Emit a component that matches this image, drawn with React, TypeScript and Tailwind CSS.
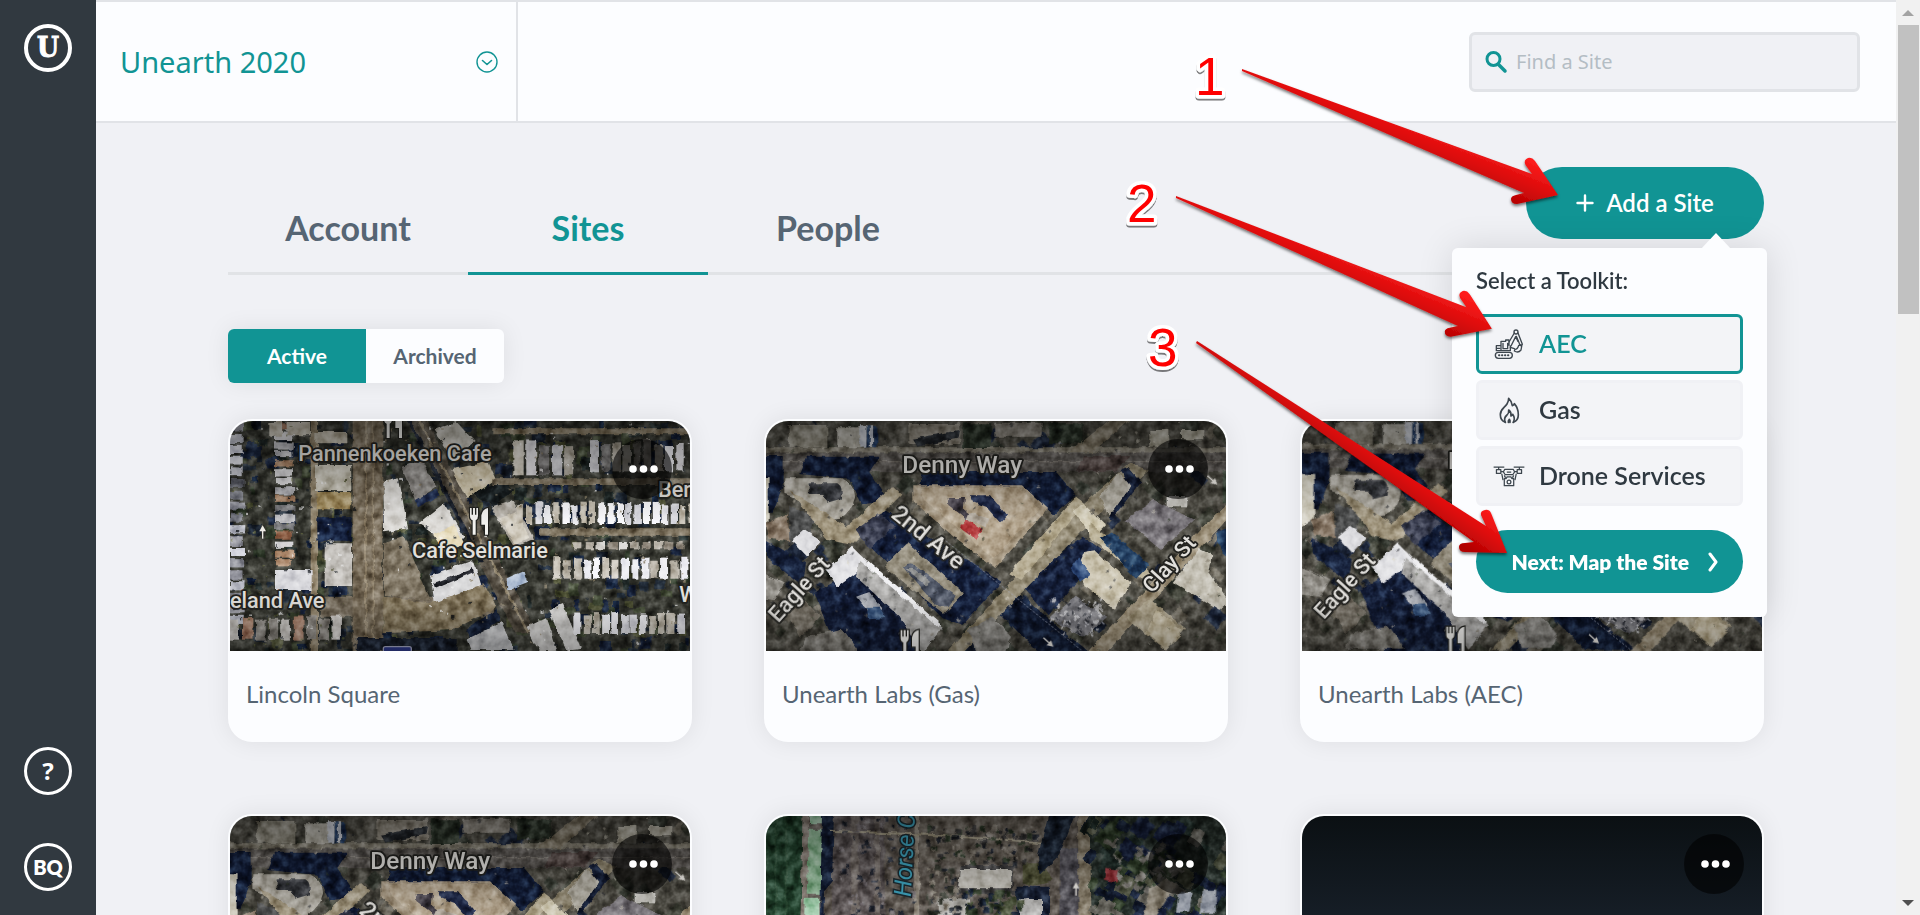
import React, { useState } from 'react';

type MapKind = 'lincoln' | 'denny' | 'horse' | 'night';

interface Site {
  id: string;
  name: string;
  map: MapKind;
  shiftX?: number;
  shiftY?: number;
}

interface Toolkit {
  key: string;
  label: string;
  icon: React.ReactNode;
}

const SITES: Site[] = [
  { id: 'lincoln', name: 'Lincoln Square', map: 'lincoln' },
  { id: 'gas', name: 'Unearth Labs (Gas)', map: 'denny' },
  { id: 'aec', name: 'Unearth Labs (AEC)', map: 'denny', shiftX: 29, shiftY: -10 },
  { id: 'labs', name: 'Unearth Labs', map: 'denny', shiftX: 12, shiftY: 3 },
  { id: 'campus', name: 'Campus', map: 'horse' },
  { id: 'night', name: 'Demo Site', map: 'night' },
];

// Small seeded generator so the map details are the same on every render
const seeded = (seed: number) => {
  let s = seed;
  return () => {
    s = (s * 16807) % 2147483647;
    return s / 2147483647;
  };
};

interface ScatterProps {
  seed: number;
  count: number;
  box: [number, number, number, number];
  size: [number, number];
  colors: string[];
  rotate?: number;
  opacity?: number;
}

const Scatter: React.FC<ScatterProps> = ({ seed, count, box, size, colors, rotate = 0, opacity = 1 }) => {
  const rand = seeded(seed);
  const [x, y, w, h] = box;
  return (
    <g opacity={opacity}>
      {Array.from({ length: count }, (_, i) => {
        const cx = x + rand() * w;
        const cy = y + rand() * h;
        const rw = size[0] + rand() * (size[1] - size[0]);
        const rh = size[0] + rand() * (size[1] - size[0]);
        const fill = colors[Math.floor(rand() * colors.length)];
        return <rect key={i} x={cx} y={cy} width={rw} height={rh} fill={fill} transform={`rotate(${rotate} ${cx} ${cy})`} />;
      })}
    </g>
  );
};

// A street of narrow houses, laid out left to right or top to bottom
const HouseRow: React.FC<{
  seed: number;
  x: number;
  y: number;
  length: number;
  depth: number;
  step: number;
  vertical?: boolean;
  colors: string[];
}> = ({ seed, x, y, length, depth, step, vertical = false, colors }) => {
  const rand = seeded(seed);
  return (
    <g>
      {Array.from({ length: Math.floor(length / step) }, (_, i) => {
        const at = i * step + rand() * 4;
        const thick = step * (0.68 + rand() * 0.18);
        const deep = depth * (0.8 + rand() * 0.2);
        const fill = colors[Math.floor(rand() * colors.length)];
        return vertical ? (
          <rect key={i} x={x} y={y + at} width={deep} height={thick} fill={fill} />
        ) : (
          <rect key={i} x={x + at} y={y + depth - deep} width={thick} height={deep} fill={fill} />
        );
      })}
    </g>
  );
};

const ROOFS = ['#c9c9cd', '#e0dfe2', '#a9a397', '#8f8a82', '#d3cec2', '#f0f0f4', '#6e6c6b'];
const TREES = ['#2b3526', '#3c4430', '#4d5034', '#1d2524', '#222c38'];
const SHADOWS = ['#0f1a30', '#18233b', '#141b26'];

const MapLabel: React.FC<{ x: number; y: number; size: number; rotate?: number; children: React.ReactNode }> = ({
  x,
  y,
  size,
  rotate = 0,
  children,
}) => (
  <text
    transform={`translate(${x} ${y}) rotate(${rotate})`}
    fontFamily="Roboto, sans-serif"
    fontSize={size}
    fontWeight={500}
    fill="#e2e0dc"
    stroke="#22221f"
    strokeWidth={11}
    strokeLinejoin="round"
    paintOrder="stroke"
  >
    {children}
  </text>
);

const Cutlery: React.FC<{ x: number; y: number }> = ({ x, y }) => (
  <g transform={`translate(${x} ${y})`} stroke="#22221f" strokeWidth={7} paintOrder="stroke" fill="#f4f3f0">
    <path d="M0 0h5v20h4V0h6v20h4V0h5v24q0 10-7 13v43H8V37Q0 34 0 24z" />
    <path d="M54 0v80h-9V50H34V22Q38 2 54 0z" />
  </g>
);

const MapArrow: React.FC<{ x: number; y: number; rotate: number }> = ({ x, y, rotate }) => (
  <g transform={`translate(${x} ${y}) rotate(${rotate})`} fill="#efece6">
    <rect x={-40} y={-2} width={30} height={4} />
    <path d="M0 0l-18-10v20z" />
  </g>
);

const LincolnMap: React.FC = () => (
  <g>
    <g filter="url(#rough)">
      <rect x="0" y="0" width="1440" height="760" fill="#35362f" />
      <Scatter seed={11} count={420} box={[20, 20, 1400, 710]} size={[10, 42]} colors={[...TREES, ...SHADOWS]} />
      <path d="M272 30h22v700h-22zM820 55h600v18H820z" fill="#8d8068" />
      <path d="M300 560h520v60H300z" fill="#6d6353" />
      {/* Main street and the diagonal avenue */}
      <path d="M398 30h92v700h-92z" fill="#746855" />
      <path d="M436 30h4v700h-4zM458 30h3v700h-3z" fill="#9b8d74" />
      <path d="M560 30h60l330 640h-64z" fill="#544d42" />
      <path d="M592 30h8l330 640h-8z" fill="#8c8069" />
      <path d="M560 30h12l220 430h-14z" fill="#171c26" />
      <path d="M490 560l140 20 160-60 40 70-130 70-210 10z" fill="#807359" />
      <path d="M492 400l60-20 80 190-140-12z" fill="#807664" />
      {/* West blocks */}
      <HouseRow seed={3} x={30} y={36} length={640} depth={46} step={34} vertical colors={['#b9bbc4', '#8e8f98', '#d7d8e0', '#6c6e77']} />
      <HouseRow seed={4} x={165} y={40} length={440} depth={62} step={27} vertical colors={['#b9b9bd', '#a58063', '#77777a', '#d3d2d4', '#8d5f46']} />
      <path d="M148 36h38v44h-38zM200 36h70v40h-70zM286 66h96v34h-96z" fill="#bfb9aa" />
      <path d="M165 480h110v60H165z" fill="#d9d9dd" />
      <path d="M288 165h106v78H288z" fill="#c3bfb2" />
      <path d="M290 246h104v52H290z" fill="#9f8a5c" />
      <path d="M292 322h102v70H292z" fill="#131e3a" />
      <path d="M314 400h82v128h-82z" fill="#c2bfba" />
      <HouseRow seed={8} x={30} y={615} length={360} depth={74} step={38} colors={['#8b8781', '#a37d68', '#c9c6c2', '#6d6a66']} />
      {/* Blocks between the two streets */}
      <path d="M490 215l46-10 28 150-72 12z" fill="#dad8d4" />
      <path d="M545 170l60-20 44 80-62 44z" fill="#8d8a86" />
      <path d="M584 270l66-34 8 20-64 36z" fill="#1d2a4c" />
      <path d="M640 60l70-24 54 60-66 44z" fill="#c2bfb6" />
      <path d="M694 178l110-22 24 54-88 54z" fill="#cdc3aa" />
      <path d="M760 250l90-40 30 30-60 50z" fill="#171d1f" />
      <path d="M596 340l76-60 58 100-30 30z" fill="#dcdad6" />
      <path d="M640 375l62-30 30 60-60 20z" fill="#e6dbbc" />
      <path d="M812 290l66-20 64 116-60 26z" fill="#b4afa6" />
      <path d="M838 325l50-18 40 76-44 22z" fill="#d0cabd" />
      <path d="M630 495l130-44 24 74-140 52z" fill="#d5d5d6" />
      <path d="M640 520l118-46 4 12-116 50z" fill="#23252b" />
      <path d="M735 660l94-62 12 34-88 54z" fill="#131c31" />
      <path d="M740 690l104-54 40 84H752z" fill="#bcbdbf" />
      <path d="M920 650l60-26 32 98-56 2z" fill="#c9c8c6" />
      <path d="M985 600l44-18 54 134-42 6z" fill="#d2d1cf" />
      <path d="M860 505l50-22 12 34-60 24z" fill="#aebdd2" />
      {/* East side streets */}
      <path d="M960 355h460v22H960zM820 205h600v20H820z" fill="#7f7460" />
      <HouseRow seed={21} x={880} y={88} length={190} depth={108} step={38} colors={ROOFS} />
      <HouseRow seed={22} x={1110} y={86} length={310} depth={98} step={32} colors={ROOFS} />
      <HouseRow seed={23} x={890} y={274} length={540} depth={68} step={27} colors={['#e9e9ee', '#fafafd', '#c3bcae', '#d8d8de']} />
      <HouseRow seed={24} x={1060} y={392} length={360} depth={26} step={34} colors={['#b3ada2', '#d8d6d2', '#8f877b']} />
      <HouseRow seed={25} x={1000} y={440} length={420} depth={66} step={29} colors={['#ececf1', '#cfcac0', '#f8f8fb', '#b5afa3']} />
      <HouseRow seed={26} x={1060} y={606} length={360} depth={66} step={28} colors={['#d6d6dc', '#bdb7ab', '#ececf0']} />
      <Scatter seed={31} count={220} box={[490, 40, 920, 680]} size={[3, 9]} colors={['#151a20', '#f4f4f4', '#8d8168']} opacity={0.7} />
      <Scatter seed={32} count={110} box={[30, 40, 370, 680]} size={[3, 10]} colors={['#151a20', '#e4e4e4', '#5b5f37']} opacity={0.7} />
      <path d="M410 684h300v40H410z" fill="#141a26" />
    </g>
    <rect x="490" y="710" width="84" height="40" rx="6" fill="#2e3a8c" stroke="#a5a8c4" strokeWidth="4" />
    <Cutlery x={492} y={4} />
    <Cutlery x={750} y={294} />
    <MapArrow x={128} y={346} rotate={-90} />
    <MapLabel x={235} y={153} size={65}>Pannenkoeken Cafe</MapLabel>
    <MapLabel x={576} y={445} size={65}>Cafe Selmarie</MapLabel>
    <MapLabel x={30} y={595} size={65}>eland Ave</MapLabel>
    <MapLabel x={1314} y={260} size={65}>Ber</MapLabel>
    <MapLabel x={1378} y={577} size={65}>W</MapLabel>
  </g>
);

const DennyMap: React.FC = () => (
  <g>
    <g filter="url(#rough)">
      <rect x="-60" y="-40" width="1560" height="820" fill="#4a4840" />
      <Scatter
        seed={5}
        count={260}
        box={[-50, -20, 1500, 780]}
        size={[16, 60]}
        colors={['#33372f', '#3b3d33', '#59564d', '#6b665a', '#4f4c44', '#1b2437']}
        rotate={42}
      />
      {/* North side of Denny Way */}
      <path d="M-60 112h1560v16H-60z" fill="#837e71" />
      <path d="M-60 128h1560v58H-60z" fill="#56524e" />
      <path d="M-60 154h1560v3H-60z" fill="#7b766e" />
      <path d="M985 138h140l-50 46H960z" fill="#4b3f3c" />
      <path d="M98 45h116v66H98z" fill="#8d897c" />
      <path d="M244 52h70v60h-70z" fill="#b3b0a6" />
      <path d="M310 46h22v64h-22zM340 46h12v64h-12z" fill="#c8ccd4" />
      <path d="M332 46h9v66h-9zM352 46h12v66h-12z" fill="#274066" />
      <path d="M460 42h150v60H460z" fill="#8b8579" />
      <path d="M470 86l140-26-6 26-120 24z" fill="#22262b" />
      <path d="M715 38h142v42H715z" fill="#8c877e" />
      <path d="M620 40h86v74h-86zM880 40h100v60H880z" fill="#272f25" />
      <path d="M1060 30h60l-110 96h-70z" fill="#7d7564" />
      <path d="M1180 60h60v50h-60zM1275 60h70v28h-70z" fill="#aaa698" />
      {/* Building shadows */}
      <path d="M-60 138H80v90l-30 80H-60zM150 140h220l-30 46 60 90-80 10-40-80-150-14z" fill="#111b35" />
      <path d="M500 186h400l60 70-66 60-96-88H490z" fill="#111b35" />
      <path d="M30 390l120 70-10 70-110-90z" fill="#141e37" />
      <path d="M370 290l370 225-120 130-60-20-190-190-70-70z" fill="#131d38" />
      <path d="M175 550l120-70 240 180-60 80H250z" fill="#121b34" />
      <path d="M790 520l190-140 60 40-160 200z" fill="#151f3a" />
      <path d="M720 600l70-50 210 180H850z" fill="#10192f" />
      {/* West block */}
      <path d="M85 205h170q40 14 42 58-10 40-46 64l-56 4-30-50-80-30z" fill="#a9a59b" />
      <path d="M158 220h86q20 12 10 46l-40 12-12-26h-44z" fill="#3a3c41" />
      <path d="M-30 205h68v130l-68 40z" fill="#d8d4c6" />
      <path d="M100 290l80 30-20 60-64 30z" fill="#4a4b4b" />
      <path d="M30 340l66-30 4 84-60-8z" fill="#7f6f5e" />
      <path d="M100 240l170 110 140-120 26 24-150 150-70-14z" fill="#9d927a" />
      <path d="M108 392l36-32 50 32-42 46z" fill="#dcdcdf" />
      <path d="M300 360l66-50 54 36-80 70z" fill="#363a4c" />
      <path d="M384 470l70-70 170 150-60 62z" fill="#918a79" />
      <path d="M440 470q20-20 44 0l116 88-22 30q-36 10-54-20z" fill="#4f5665" />
      <path d="M452 480q18-10 34 6l40 30-14 10z" fill="#8a8b8a" />
      {/* Eagle St roofs */}
      <path d="M208 480l80-70 50 50-92 70z" fill="#e1e1e4" />
      <path d="M310 450l250 200-60 80-70-110-130-120z" fill="#a9a8a6" />
      <path d="M336 452l220 190-10 10-216-186z" fill="#f0f0f2" />
      <path d="M-30 470l116 50-30 50-86-10z" fill="#8f8c85" />
      <path d="M86 600l60-30 46 50-60 64z" fill="#706a5f" />
      <path d="M300 560l40-14 40 50-30 24z" fill="#9fa3ab" />
      <path d="M330 590l40 0 20 34-50 4z" fill="#314d75" />
      <path d="M150 680l110-24 50 70H130z" fill="#7a7770" />
      {/* Triangular lot at 2nd Ave */}
      <path d="M472 226h326l78 70-158 178-110-80-136-120z" fill="#a3957f" />
      <path d="M490 234h300l60 62-136 150-210-176z" fill="#b1a28b" />
      <path d="M575 264h52l-4 34 30 22-16 14-60-46z" fill="#46414a" />
      <path d="M640 256h62l52 62-20 22-44-50-38-14z" fill="#1d2644" />
      <path d="M640 306l60 20-8 26-60-24z" fill="#b5ada1" />
      <path d="M632 328l48 30-20 30-48-36z" fill="#b23a3c" />
      {/* Avenue running north east */}
      <path d="M570 730l390-430 160-140 60 20-170 150-390 400z" fill="#8f8670" />
      <path d="M760 490l200-230 26 20-190 230z" fill="#b3a98f" />
      <path d="M950 300l30-20 70 66-40 40z" fill="#d3ccb6" />
      <path d="M1000 340l70 50 120 100-30 20-160-130z" fill="#b9b096" />
      <path d="M1034 386l36-20 110 100-40 40z" fill="#1f3a5c" />
      <path d="M1030 260l56-70 46 34-70 100z" fill="#b2aea3" />
      <path d="M1090 180l26-10 40 46-90 116-10-8 70-96z" fill="#121a30" />
      <path d="M1105 330l90-60 120 60-100 90z" fill="#79757a" />
      <path d="M1232 258h62v34h-62z" fill="#c4c2bc" />
      {/* Clay St */}
      <path d="M980 740l190-200 170-190 90-80v40l-200 220-190 210z" fill="#998d76" />
      <path d="M985 425l30-4 108 98-46 80-90-70-24-50z" fill="#c8c1ad" />
      <path d="M944 474l24-34 34 56-30 22z" fill="#2f4a78" />
      <path d="M882 626l74-66 98 60-70 66z" fill="#77777c" />
      <path d="M636 660l70-40 62 60-20 44H660z" fill="#85837e" />
      <path d="M1110 626l70-60 110 90-60 66z" fill="#a59b83" />
      <path d="M1200 600l80 60-50 60-60-50z" fill="#c2b89f" />
      <path d="M1250 516l80-100 40 20-10 50 60 90-30 26z" fill="#c0bcb0" />
      <path d="M1380 370l60-30v120l-46-40z" fill="#1c3456" />
      <path d="M1400 180h100v100h-100z" fill="#3c463a" />
      <Scatter seed={44} count={260} box={[-40, 0, 1500, 740]} size={[3, 10]} colors={['#14171d', '#d9d4c5', '#7c7463', '#2c3524']} rotate={42} opacity={0.5} />
      <Scatter seed={45} count={70} box={[890, 560, 150, 110]} size={[4, 12]} colors={['#dadadd', '#20242c']} rotate={42} opacity={0.7} />
    </g>
    <path d="M560 385L1000 740" stroke="#a9afc0" strokeWidth="2" strokeDasharray="7 5" />
    <MapArrow x={1384} y={224} rotate={42} />
    <MapArrow x={892} y={710} rotate={42} />
    <Cutlery x={434} y={660} />
    <MapLabel x={439} y={188} size={73}>Denny Way</MapLabel>
    <MapLabel x={402} y={318} size={72} rotate={39}>2nd Ave</MapLabel>
    <MapLabel x={66} y={640} size={65} rotate={-48}>Eagle St</MapLabel>
    <MapLabel x={1188} y={552} size={65} rotate={-48}>Clay St</MapLabel>
  </g>
);

const HorseMap: React.FC = () => (
  <g>
    <g filter="url(#rough)">
      <rect x="0" y="0" width="1440" height="760" fill="#5e5750" />
      <path d="M0 20h140l-14 720H0z" fill="#23432e" />
      <path d="M60 20v720M90 20v720M30 20v720" stroke="#3c5c44" strokeWidth="2" />
      <path d="M140 20h20l-10 720h-24z" fill="#8b8178" />
      <path d="M160 74h38v192h-46z" fill="#8fb996" />
      <path d="M162 20h36v38h-36zM146 278h44v300h-50z" fill="#a3cfae" />
      <path d="M198 20h36l-6 210-24 30-10 480h-8z" fill="#141e35" />
      <path d="M236 20h150v720H214z" fill="#5c5555" />
      <path d="M286 20h22v720h-22zM356 20h16v720h-16z" fill="#736b66" />
      <path d="M476 20h14v720h-18z" fill="#8f877a" />
      <path d="M490 20h390v150H490z" fill="#665f56" />
      <path d="M220 74l300 12 340 24v5l-340-22-300-13z" fill="#a39b85" />
      <path d="M614 180h170v10h-14v64h12v12H600z" fill="#20252e" opacity=".5" />
      <path d="M612 192h154v58H606z" fill="#c6c3bb" />
      <path d="M545 280h94v90h-94z" fill="#b5b3ae" />
      <path d="M782 245h100v90H782z" fill="#1a2338" />
      <path d="M790 282h68v60h-68z" fill="#b9b8b6" />
      <path d="M800 175h60l30 50-60 20-30-10z" fill="#4c4d33" />
      <path d="M880 20h80l-50 130-60 60-4-60z" fill="#182130" />
      <path d="M912 130h56v610h-62z" fill="#55535a" />
      <path d="M966 20h34l20 720h-50z" fill="#867c69" />
      <path d="M1000 20h430v720H1016z" fill="#27302b" />
      <Scatter seed={61} count={110} box={[1000, 20, 420, 330]} size={[14, 60]} colors={['#17203a', '#2f3d29', '#1c2824', '#4f5340', '#121a2c', '#66645c']} rotate={30} />
      <Scatter seed={62} count={50} box={[1080, 120, 200, 120]} size={[8, 26]} colors={['#8e8b84', '#6f6c66', '#2f3d29']} rotate={40} />
      <Scatter seed={66} count={60} box={[620, 250, 170, 130]} size={[8, 30]} colors={['#2a3524', '#434b33', '#172030']} />
      <path d="M1048 192l40 4-6 36-38-8z" fill="#9a3b41" />
      <path d="M1340 254h40v70h-46zM1270 260h40l-10 60h-40z" fill="#9aa0ab" />
      <path d="M1180 250l50-30 30 20-70 110h-30z" fill="#8c8475" />
      <Scatter seed={63} count={70} box={[250, 30, 220, 330]} size={[5, 18]} colors={['#1f232d', '#7d777a', '#2b303c']} />
      <Scatter seed={64} count={90} box={[510, 60, 320, 110]} size={[6, 20]} colors={['#1f232b', '#2c2b2b', '#8d867c', '#2f3a2a']} />
      <Scatter seed={65} count={60} box={[510, 180, 90, 160]} size={[6, 20]} colors={['#22262c', '#3a3d34', '#8b8478']} />
    </g>
    <MapArrow x={960} y={232} rotate={-90} />
    <text
      transform="translate(464 276) rotate(-87)"
      fontFamily="Roboto, sans-serif"
      fontSize="72"
      fontStyle="italic"
      fill="#3fa3bd"
      stroke="#1c2a30"
      strokeWidth="9"
      paintOrder="stroke"
    >
      Horse C
    </text>
  </g>
);

const MapDefs: React.FC = () => (
  <svg className="absolute h-0 w-0" aria-hidden="true">
    <defs>
      <filter id="rough" x="0" y="0" width="100%" height="100%" colorInterpolationFilters="sRGB">
        <feTurbulence type="fractalNoise" baseFrequency="0.04" numOctaves="2" seed="4" result="warp" />
        <feDisplacementMap in="SourceGraphic" in2="warp" scale="14" xChannelSelector="R" yChannelSelector="G" result="bent" />
        <feGaussianBlur in="bent" stdDeviation="1.8" result="soft" />
        <feTurbulence type="fractalNoise" baseFrequency="0.035" numOctaves="3" seed="9" result="noise" />
        <feColorMatrix in="noise" type="matrix" values="1.2 0 0 0 -0.07  1.2 0 0 0 -0.07  1.2 0 0 0 -0.07  0 0 0 0 1" result="gray" />
        <feBlend in="gray" in2="soft" mode="soft-light" />
      </filter>
      <linearGradient id="shade" x1="0" y1="0" x2="0" y2="1">
        <stop offset="0" stopColor="#000" stopOpacity=".4" />
        <stop offset=".45" stopColor="#000" stopOpacity="0" />
        <stop offset=".75" stopColor="#000" stopOpacity="0" />
        <stop offset="1" stopColor="#000" stopOpacity=".3" />
      </linearGradient>
      <linearGradient id="night" x1="0" y1="0" x2="0" y2="1">
        <stop offset="0" stopColor="#0b1013" />
        <stop offset=".45" stopColor="#161e27" />
        <stop offset="1" stopColor="#18222b" />
      </linearGradient>
    </defs>
  </svg>
);

const SiteMap: React.FC<{ site: Site }> = ({ site }) => {
  const { map, shiftX = 0, shiftY = 0 } = site;
  if (map === 'night') {
    return (
      <svg className="block h-full w-full" viewBox="0 0 1380 690" preserveAspectRatio="none">
        <rect width="1380" height="690" fill="url(#night)" />
      </svg>
    );
  }
  const left = 30 - shiftX;
  const top = 33 - shiftY;
  return (
    <svg className="block h-full w-full" viewBox={`${left} ${top} 1380 690`} preserveAspectRatio="xMidYMid slice">
      {map === 'lincoln' && <LincolnMap />}
      {map === 'denny' && <DennyMap />}
      {map === 'horse' && <HorseMap />}
      <rect x={left} y={top} width="1380" height="690" fill="url(#shade)" />
    </svg>
  );
};

const SiteCard: React.FC<{ site: Site }> = ({ site }) => (
  <article className="rounded-3xl border-2 border-[#fcfdff] bg-[#fcfdff] shadow-[0_0_24px_rgba(0,0,0,0.08)]">
    <div className="relative h-[230px] overflow-hidden rounded-t-[22px]">
      <SiteMap site={site} />
      <button
        type="button"
        aria-label={`Options for ${site.name}`}
        className="absolute right-[18px] top-[18px] flex h-[60px] w-[60px] items-center justify-center rounded-full bg-black/60"
      >
        <svg width="32" height="8" viewBox="0 0 32 8" fill="#fff">
          <circle cx="7" cy="4" r="3.8" />
          <circle cx="17.5" cy="4" r="3.8" />
          <circle cx="28" cy="4" r="3.8" />
        </svg>
      </button>
    </div>
    <h2 className="px-4 pb-8 pt-7 text-2xl leading-[29px] text-[#566573]">{site.name}</h2>
  </article>
);

const ExcavatorIcon = () => (
  <svg width="32" height="32" viewBox="280 292 96 96" fill="none" stroke="#3d464e" strokeWidth="4" strokeLinejoin="round" strokeLinecap="round">
    <rect x="287" y="365" width="51" height="18" rx="9" />
    <path d="M298 374h1M307 374h1M316 374h1M325 374h1" strokeWidth="6" />
    <path d="M290 360v-15h13M290 353h10M290 360h42v-14M304 360v-28h14v-4h10v16M310 338v16h14v-16M303 345h-8" />
    <path d="M328 334l16-27M334 346l14-28 7 14M332 350l12 4" />
    <circle cx="349" cy="304" r="6" />
    <path d="M355 307l13 34-6 4-12-28M367 342l-3 16q-8 10-20 3l2-5q8 0 11-12z" />
  </svg>
);

const FlameIcon = () => (
  <svg width="32" height="32" viewBox="278 492 96 96" fill="none" stroke="#3d464e" strokeWidth="5" strokeLinejoin="round" strokeLinecap="round">
    <path d="M315 577c-10-4-15-13-15-23 0-17 13-21 20-32 4-6 5-11 5-17 9 8 10 15 11 22 3-1 5-3 6-6 6 7 12 20 12 33 0 10-5 19-15 23" />
    <path d="M315 577c-5-10-1-17 5-22 4-4 6-9 5-15 7 5 8 10 7 18 3-1 4-3 5-5 5 7 7 15 2 24M324 577c-1-5 1-7 3-9 2 3 3 5 2 9" />
  </svg>
);

const DroneIcon = () => (
  <svg width="34" height="32" viewBox="276 692 102 96" fill="none" stroke="#3d464e" strokeWidth="4" strokeLinejoin="round">
    <path d="M278 712h34M342 712h34M294 712v8M360 712v8" />
    <rect x="287" y="720" width="14" height="12" />
    <rect x="353" y="720" width="14" height="12" />
    <path d="M301 726h10M343 726h10M313 719h28l4 8-6 9h-24l-6-9zM320 728h14" />
    <path d="M304 733l4 20M350 733l-4 20M312 738l4 8M342 738l-4 8" />
    <path d="M312 748h6l3-5h12l3 5h6v23h-30z" />
    <circle cx="327" cy="759" r="6" />
  </svg>
);

const TOOLKITS: Toolkit[] = [
  { key: 'aec', label: 'AEC', icon: <ExcavatorIcon /> },
  { key: 'gas', label: 'Gas', icon: <FlameIcon /> },
  { key: 'drone', label: 'Drone Services', icon: <DroneIcon /> },
];

const ToolkitMenu: React.FC = () => {
  const [selected, setSelected] = useState('aec');

  return (
    <div className="absolute -right-[3px] top-[81px] z-10 w-[315px] rounded-md bg-[#fcfdff] p-6 shadow-[0_0_36px_rgba(0,0,0,0.12)]">
      <svg className="absolute -top-[15px] right-9" width="30" height="16" viewBox="0 0 30 16" fill="#fcfdff">
        <path d="M0 16L15 0l15 16z" />
      </svg>
      <fieldset>
        <legend className="float-left mb-6 text-[22px] font-semibold leading-[18px] text-[#2f3941]">Select a Toolkit:</legend>
        <div className="clear-both flex flex-col gap-1.5">
          {TOOLKITS.map((kit) => (
            <label
              key={kit.key}
              className={`flex h-[60px] cursor-pointer items-center rounded-md bg-[#f3f4f7] pl-3.5 text-[25px] font-semibold ${
                selected === kit.key ? 'border-3 border-[#119494] text-[#119494]' : 'border-3 border-[#f0f1f5] text-[#2f3941]'
              }`}
            >
              <input
                type="radio"
                name="toolkit"
                value={kit.key}
                checked={selected === kit.key}
                onChange={() => setSelected(kit.key)}
                className="sr-only"
              />
              <span className="mr-3.5 flex w-8 shrink-0 justify-center">{kit.icon}</span>
              {kit.label}
            </label>
          ))}
        </div>
      </fieldset>
      <button
        type="button"
        className="mt-6 flex h-[63px] w-full items-center justify-end gap-[18px] rounded-full bg-[#119494] pr-6 text-[21px] font-extrabold text-white"
      >
        Next: Map the Site
        <svg width="12" height="20" viewBox="0 0 12 20" fill="none" stroke="currentColor" strokeWidth="3" strokeLinecap="round" strokeLinejoin="round">
          <path d="M3 2l6 8-6 8" />
        </svg>
      </button>
    </div>
  );
};

// Numbered walkthrough arrows that lie over the page
const Walkthrough: React.FC = () => (
  <svg className="pointer-events-none absolute right-0 top-0 z-20" width="800" height="620" viewBox="1120 0 800 620">
    <defs>
      <linearGradient id="arrowRed" gradientUnits="userSpaceOnUse" x1="1532" y1="160" x2="1514" y2="206">
        <stop offset="0" stopColor="#ff1c1c" />
        <stop offset=".5" stopColor="#dd0d0d" />
        <stop offset="1" stopColor="#b00000" />
      </linearGradient>
      <linearGradient id="arrowRedSteep" gradientUnits="userSpaceOnUse" x1="1499" y1="515" x2="1473" y2="553">
        <stop offset="0" stopColor="#ff1c1c" />
        <stop offset=".5" stopColor="#dd0d0d" />
        <stop offset="1" stopColor="#b00000" />
      </linearGradient>
      <filter id="arrowShadow" x="-10%" y="-10%" width="120%" height="120%">
        <feDropShadow dx="0" dy="2" stdDeviation="1.5" floodColor="#000" floodOpacity=".55" />
      </filter>
      <filter id="numberShadow" x="-20%" y="-20%" width="150%" height="150%">
        <feDropShadow dx="0" dy="2" stdDeviation=".5" floodColor="#000" floodOpacity=".5" />
      </filter>
    </defs>
    <g filter="url(#arrowShadow)">
      <path
        fill="url(#arrowRed)"
        d="M1242 69L1532 174L1525.500 165Q1523 160 1528 158Q1532 157 1535 161L1558 195L1517 204Q1511 204 1511 199Q1511 196 1516 195L1524 193L1242 71Z"
      />
      <path
        fill="url(#arrowRed)"
        transform="translate(-66 127) rotate(1.400 1242 70)"
        d="M1242 69L1535 173L1528.500 164Q1526 159 1531 157Q1535 156 1538 160L1561 194L1520 203Q1514 203 1514 198Q1514 195 1519 194L1527 192L1242 71Z"
      />
      <path
        fill="url(#arrowRedSteep)"
        d="M1197 341L1486 526L1481 515Q1480 511 1485 510Q1489 509 1491 513L1507 553L1465 552Q1459 552 1459 547Q1459 543 1465 543L1474 542L1196 343Z"
      />
    </g>
    <g
      filter="url(#numberShadow)"
      fontFamily="'Liberation Sans', Arial, sans-serif"
      fontSize="53"
      fill="#ff0000"
      stroke="#fff"
      strokeWidth="7"
      strokeLinejoin="round"
      paintOrder="stroke"
    >
      <text x="1195" y="95">1</text>
      <text x="1127" y="222">2</text>
      <text x="1148" y="366">3</text>
    </g>
  </svg>
);

const Sidebar: React.FC = () => (
  <aside className="flex w-24 shrink-0 flex-col items-center bg-[#313940] py-6 text-white">
    <a
      href="#home"
      aria-label="Unearth home"
      className="flex h-12 w-12 items-center justify-center rounded-full border-4 border-white font-['DejaVu_Serif_Condensed','DejaVu_Serif',serif] text-[28px] font-bold leading-none [-webkit-text-stroke:1px_white]"
    >
      U
    </a>
    <button type="button" aria-label="Help" className="mt-auto h-12 w-12 rounded-full border-3 border-white font-['Noto_Sans',sans-serif] text-2xl font-bold leading-none">
      ?
    </button>
    <button type="button" aria-label="Account menu" className="mt-12 h-12 w-12 rounded-full border-3 border-white text-xl font-extrabold leading-none">
      BQ
    </button>
  </aside>
);

const Header: React.FC = () => (
  <header className="flex h-[123px] items-stretch border-y-2 border-[#e1e3e7] bg-[#fcfdff] font-['Noto_Sans',sans-serif]">
    <button type="button" className="flex w-[422px] items-center justify-between border-r-2 border-[#e1e3e7] pl-6 pr-[18px] text-[29px] text-[#119494]">
      Unearth 2020
      <svg width="22" height="22" viewBox="0 0 22 22" fill="none" stroke="currentColor">
        <circle cx="11" cy="11" r="10" strokeWidth="1.400" />
        <path d="M6.500 9.500l4.500 4 4.500-4" strokeWidth="1.600" strokeLinecap="round" strokeLinejoin="round" />
      </svg>
    </button>
    <div className="ml-auto flex items-center pr-9">
      <label className="flex h-[60px] w-[391px] items-center gap-2 rounded-md border-3 border-[#e1e3e7] bg-[#f0f1f5] px-3">
        <svg className="shrink-0" width="24" height="24" viewBox="0 0 24 24" fill="none" stroke="#119494" strokeLinecap="round">
          <circle cx="9.500" cy="9" r="6.500" strokeWidth="3" />
          <path d="M14.500 14.500l6.500 6.500" strokeWidth="3.500" />
        </svg>
        <input
          type="text"
          aria-label="Find a Site"
          placeholder="Find a Site"
          className="w-full bg-transparent text-xl text-[#2f3941] outline-none placeholder:text-[#b4bdc4]"
        />
      </label>
    </div>
  </header>
);

const TABS = ['Account', 'Sites', 'People'];

const App: React.FC = () => {
  const [tab, setTab] = useState('Sites');
  const [filter, setFilter] = useState('Active');

  return (
    <div className="relative flex h-screen overflow-hidden bg-[#f0f1f5] font-[Lato,sans-serif]">
      <MapDefs />
      <Sidebar />
      <div className="min-w-0 flex-1">
        <Header />
        <main className="px-[132px] pt-11">
          <div className="flex h-[108px] justify-between border-b-3 border-[#e1e3e6]">
            <nav className="flex items-end">
              {TABS.map((name) => (
                <button
                  key={name}
                  type="button"
                  onClick={() => setTab(name)}
                  className={`-mb-[3px] h-[93px] w-60 border-b-3 text-[34px] font-bold ${
                    tab === name ? 'border-[#119494] text-[#119494]' : 'border-transparent text-[#566573]'
                  }`}
                >
                  {name}
                </button>
              ))}
            </nav>
            <div className="relative">
              <button
                type="button"
                className="flex h-[72px] w-[238px] items-center justify-center gap-3 rounded-full bg-[#119494] text-2xl font-semibold text-white"
              >
                <svg width="18" height="18" viewBox="0 0 18 18" stroke="currentColor" strokeWidth="2.400" strokeLinecap="round">
                  <path d="M9 1.500v15M1.500 9h15" />
                </svg>
                Add a Site
              </button>
              <ToolkitMenu />
            </div>
          </div>

          <div className="mt-[54px] flex h-[54px] w-fit overflow-hidden rounded-md bg-[#fcfdff] shadow-[0_0_24px_rgba(0,0,0,0.08)]">
            {['Active', 'Archived'].map((name) => (
              <button
                key={name}
                type="button"
                onClick={() => setFilter(name)}
                className={`w-[138px] text-[21px] font-bold ${filter === name ? 'bg-[#119494] text-white' : 'text-[#566573]'}`}
              >
                {name}
              </button>
            ))}
          </div>

          <section className="mt-9 grid grid-cols-3 gap-[72px]">
            {SITES.map((site) => (
              <SiteCard key={site.id} site={site} />
            ))}
          </section>
        </main>
      </div>

      {/* Page scrollbar */}
      <div className="flex w-6 shrink-0 flex-col items-center bg-[#f1f1f1]">
        <svg width="24" height="25" viewBox="0 0 24 25" fill="#a3a3a3">
          <path d="M6 16l6-6 6 6z" />
        </svg>
        <div className="h-[289px] w-[21px] bg-[#c1c1c1]" />
        <svg className="mt-auto" width="24" height="25" viewBox="0 0 24 25" fill="#505050">
          <path d="M6 10l6 6 6-6z" />
        </svg>
      </div>
      <Walkthrough />
    </div>
  );
};

export default App;
